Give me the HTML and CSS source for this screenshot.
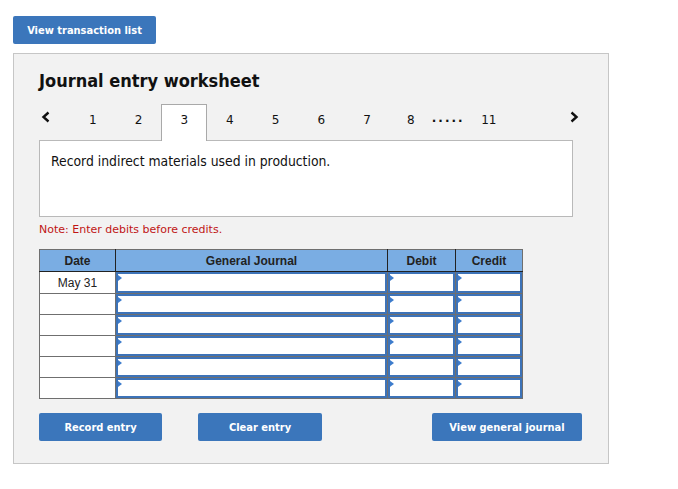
FILE: index.html
```html
<!DOCTYPE html>
<html>
<head>
<meta charset="utf-8">
<link rel="stylesheet" href="styles.css">
</head>
<body>
<button class="btn btn-top">View transaction list</button>
<div class="panel">
  <h1 class="title">Journal entry worksheet</h1>
  <div class="tabs">
    <span class="nav nav-prev"><svg width="10" height="12" viewBox="0 0 10 12"><polyline points="7.5,1.5 2.5,6 7.5,10.5" fill="none" stroke="#111" stroke-width="2.4"/></svg></span>
    <span class="tab">1</span>
    <span class="tab">2</span>
    <span class="tab active">3</span>
    <span class="tab">4</span>
    <span class="tab">5</span>
    <span class="tab">6</span>
    <span class="tab">7</span>
    <span class="tab tab-8">8</span>
    <span class="dots">.....</span>
    <span class="tab tab-11">11</span>
    <span class="nav nav-next"><svg width="10" height="12" viewBox="0 0 10 12"><polyline points="2.5,1.5 7.5,6 2.5,10.5" fill="none" stroke="#111" stroke-width="2.4"/></svg></span>
  </div>
  <div class="desc">Record indirect materials used in production.</div>
  <p class="note">Note: Enter debits before credits.</p>
  <table class="journal">
    <thead>
      <tr><th class="c-date">Date</th><th class="c-gj">General Journal</th><th class="c-dr">Debit</th><th class="c-cr">Credit</th></tr>
    </thead>
    <tbody>
      <tr class="first"><td class="date">May 31</td><td><div class="inp"></div></td><td><div class="inp"></div></td><td><div class="inp"></div></td></tr>
      <tr><td class="date"></td><td><div class="inp"></div></td><td><div class="inp"></div></td><td><div class="inp"></div></td></tr>
      <tr><td class="date"></td><td><div class="inp"></div></td><td><div class="inp"></div></td><td><div class="inp"></div></td></tr>
      <tr><td class="date"></td><td><div class="inp"></div></td><td><div class="inp"></div></td><td><div class="inp"></div></td></tr>
      <tr><td class="date"></td><td><div class="inp"></div></td><td><div class="inp"></div></td><td><div class="inp"></div></td></tr>
      <tr><td class="date"></td><td><div class="inp"></div></td><td><div class="inp"></div></td><td><div class="inp"></div></td></tr>
    </tbody>
  </table>
  <div class="actions">
    <button class="btn btn-record">Record entry</button>
    <button class="btn btn-clear">Clear entry</button>
    <button class="btn btn-view">View general journal</button>
  </div>
</div>
</body>
</html>
```
FILE: styles.css
```css
html, body {
  margin: 0;
  padding: 0;
  background: #fff;
}
body {
  font-family: "DejaVu Sans", sans-serif;
  color: #111;
}
.btn {
  display: block;
  border: none;
  border-radius: 2px;
  background: #3b76bb;
  color: #fff;
  font-family: "DejaVu Sans Condensed", "DejaVu Sans", sans-serif;
  font-weight: bold;
  font-size: 11px;
  height: 28px;
  padding: 0;
  cursor: pointer;
}
.btn-top {
  margin: 16px 0 0 13px;
  width: 143px;
}
.panel {
  margin: 9px 0 0 13px;
  height: 409px;
  border: 1px solid #c6c6c6;
  background: #f2f2f2;
  padding: 0 0 0 25px;
  box-sizing: content-box;
  width: 569px;
}
.title {
  margin: 0;
  padding-top: 16px;
  font-family: "DejaVu Sans Condensed", "DejaVu Sans", sans-serif;
  font-size: 18px;
  line-height: 22px;
  font-weight: bold;
  color: #111;
  height: 34px;
}
.tabs {
  display: flex;
  align-items: stretch;
  height: 36px;
  position: relative;
  z-index: 1;
  font-size: 12px;
}
.nav {
  display: flex;
  align-items: center;
  padding-bottom: 10px;
  box-sizing: border-box;
}
.nav-prev {
  width: 31px;
  padding-left: 2px;
}
.nav-next {
  margin-left: 61px;
}
.tab {
  width: 45.7px;
  display: flex;
  align-items: center;
  justify-content: center;
  padding-bottom: 6px;
  box-sizing: border-box;
  border: 1px solid transparent;
  border-bottom: none;
}
.tab.active {
  background: #fff;
  border-color: #a9a9a9;
  height: 37px;
}
.tab-8 {
  width: 42px;
}
.dots {
  display: flex;
  align-items: center;
  padding-bottom: 8px;
  font-weight: bold;
  letter-spacing: 2px;
  width: 38px;
  box-sizing: border-box;
}
.tab-11 {
  width: 38px;
}
.desc {
  border: 1px solid #b9b9b9;
  background: #fff;
  font-family: "DejaVu Sans Condensed", "DejaVu Sans", sans-serif;
  font-size: 13.8px;
  padding: 12px 0 0 11px;
  box-sizing: border-box;
  width: 534px;
  height: 77px;
  color: #111;
}
.note {
  margin: 6px 0 0 0;
  font-family: "DejaVu Sans", sans-serif;
  font-size: 11px;
  line-height: 14px;
  color: #c01515;
}
.journal {
  margin-top: 12px;
  border-collapse: collapse;
  font-family: "Liberation Sans", Arial, sans-serif;
  font-size: 12px;
  border: 1px solid #6f6f6f;
}
.journal th {
  background: #7aade3;
  height: 21px;
  padding: 0;
  font-weight: bold;
  color: #222;
  border: 1px solid #222;
  border-top-color: #6f6f6f;
}
.journal th.c-date { border-left-color: #6f6f6f; }
.journal th.c-cr { border-right-color: #6f6f6f; }
.c-date { width: 75px; }
.c-gj { width: 271px; }
.c-dr { width: 67px; }
.c-cr { width: 66px; }
.journal td {
  padding: 0;
  height: 20px;
  border: 1px solid #6f6f6f;
  background: #fff;
}
.journal tr.first td {
  height: 21px;
}
.journal td.date {
  text-align: center;
  color: #222;
}
.inp {
  height: 100%;
  box-sizing: border-box;
  border: 2px solid #3d73b8;
  position: relative;
  min-height: 20px;
}
.journal tr.first .inp { min-height: 21px; }
.inp::before {
  content: "";
  position: absolute;
  left: 0;
  top: 1px;
  border-left: 4px solid #3d7ccc;
  border-top: 3px solid transparent;
  border-bottom: 3px solid transparent;
}
.actions {
  display: flex;
  margin-top: 14px;
}
.btn-record { width: 123px; }
.btn-clear { width: 124px; margin-left: 36px; }
.btn-view { width: 150px; margin-left: 110px; }
```
